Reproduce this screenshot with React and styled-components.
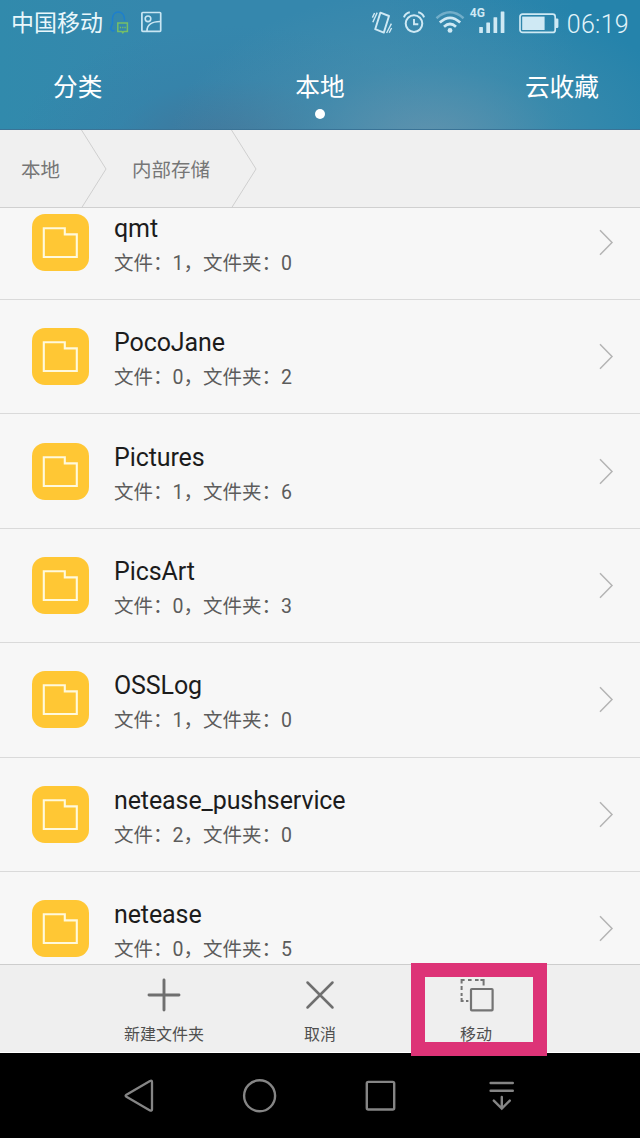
import React from 'react';
import styled, { createGlobalStyle } from 'styled-components';

const GlobalStyle = createGlobalStyle`
  * {
    box-sizing: border-box;
  }

  body {
    margin: 0;
    background: #000;
    font-family: Roboto, 'Noto Sans CJK SC', sans-serif;
  }

  svg {
    display: block;
    flex: none;
  }
`;

const Screen = styled.div`
  position: relative;
  display: flex;
  flex-direction: column;
  width: 640px;
  height: 1138px;
  overflow: hidden;
`;

const Header = styled.header`
  height: 130px;
  flex: none;
  border-bottom: 1px solid #3a7396;
  background: radial-gradient(
      ellipse 260px 150px at 430px 140px,
      rgba(100, 148, 174, 0.9),
      rgba(80, 146, 174, 0.45) 50%,
      rgba(60, 140, 172, 0) 100%
    ),
    radial-gradient(
      ellipse 220px 120px at 235px 145px,
      rgba(68, 112, 148, 0.85),
      rgba(56, 124, 164, 0.35) 55%,
      rgba(52, 132, 170, 0) 100%
    ),
    linear-gradient(90deg, #318aac 0%, #3587ad 25%, #3587ad 60%, #2583ab 90%);
`;

const StatusBar = styled.div`
  display: flex;
  align-items: center;
  justify-content: space-between;
  height: 46px;
  padding: 0 11px 0 11px;
  color: #cfe9f4;
`;

const StatusGroup = styled.div`
  display: flex;
  align-items: center;
`;

const Carrier = styled.span`
  margin-right: 6px;
  padding-top: 2px;
  font-size: 23px;
  line-height: 44px;
  color: #e9f7fb;
`;

const Clock = styled.span`
  padding-top: 3px;
  font-size: 25px;
  font-weight: 300;
  line-height: 43px;
  letter-spacing: 0.3px;
  color: #e2f4fa;
`;

const Tabs = styled.nav`
  display: grid;
  grid-template-columns: 1fr auto 1fr;
  height: 83px;
  padding: 0 41px 0 53px;
`;

const Tab = styled.div`
  display: flex;
  flex-direction: column;
  align-items: flex-start;
  padding-top: 24px;
  font-size: 24.7px;
  line-height: 36px;
  color: #fff;

  &:nth-child(2) {
    align-items: center;
    margin-left: -6px;
    margin-right: 6px;
  }

  &:last-child {
    align-items: flex-end;
  }
`;

const TabDot = styled.span`
  width: 10px;
  height: 10px;
  margin-top: 3px;
  border-radius: 50%;
  background: #fff;
`;

const Breadcrumbs = styled.div`
  display: flex;
  flex: none;
  height: 78px;
  border-bottom: 1px solid #d0d0d0;
  background: #f0f0f0;
`;

const Crumb = styled.div`
  display: flex;
  align-items: center;
  justify-content: space-between;
  width: ${props => props.$width}px;
  padding-left: ${props => props.$indent}px;
  font-size: 19.5px;
  color: #767676;
`;

const List = styled.div`
  flex: 1;
  min-height: 0;
  overflow: hidden;
  background: #f7f7f7;
`;

const Row = styled.div`
  display: flex;
  align-items: center;
  height: 114.4px;
  padding: 0 26px 0 32px;
  border-bottom: 1px solid #dadada;

  &:first-child {
    margin-top: -22.4px;
  }
`;

const FolderTile = styled.div`
  display: flex;
  align-items: center;
  justify-content: center;
  width: 57px;
  height: 57px;
  margin-right: 25px;
  border-radius: 13px;
  background: #ffc734;
`;

const RowText = styled.div`
  flex: 1;
  padding-top: 8px;
`;

const FolderName = styled.div`
  font-size: 25px;
  line-height: 34px;
  letter-spacing: -0.1px;
  color: #1c1c1c;
`;

const FolderMeta = styled.div`
  font-size: 19.5px;
  line-height: 35px;
  color: #5c5c5c;
`;

const Toolbar = styled.div`
  display: flex;
  flex: none;
  height: 89px;
  padding: 0 86px;
  border-top: 1px solid #cdcdcd;
  border-bottom: 1px solid #fff;
  background: #efefef;
`;

const ToolButton = styled.div`
  display: flex;
  flex: 1;
  flex-direction: column;
  align-items: center;
  padding-top: 12px;
  font-size: 16px;
  line-height: 22px;
  white-space: nowrap;
  color: #4f4f4f;

  svg {
    margin-bottom: 11px;
  }
`;

const NavBar = styled.div`
  display: flex;
  flex: none;
  height: 85px;
  padding: 0 78px;
  background: #000;
`;

const NavButton = styled.div`
  display: flex;
  flex: 1;
  align-items: center;
  justify-content: center;
`;

const Highlight = styled.div`
  position: absolute;
  left: 411px;
  top: 963px;
  width: 136px;
  height: 93px;
  border: 14px solid #dd3377;
`;

const folders = [
  { name: 'qmt', files: 1, dirs: 0 },
  { name: 'PocoJane', files: 0, dirs: 2 },
  { name: 'Pictures', files: 1, dirs: 6 },
  { name: 'PicsArt', files: 0, dirs: 3 },
  { name: 'OSSLog', files: 1, dirs: 0 },
  { name: 'netease_pushservice', files: 2, dirs: 0 },
  { name: 'netease', files: 0, dirs: 5 }
];

const NotificationIcons = () => (
  <svg width="54" height="26" viewBox="0 0 54 26" fill="none">
    <path
      d="M5.5 20.5 L3.5 21 L1.5 18.5 L3.5 13.5 V9 C3.5 -0.5 15 -0.5 15.5 9 V11"
      stroke="#1d7fce"
      strokeWidth="1.5"
    />
    <path
      d="M8.8 13 H18.4 V21.6 H14.8 L13.8 22.8 L12.8 21.6 H8.8 Z"
      stroke="#76bf67"
      strokeWidth="1.5"
    />
    <path d="M10.8 17.5 H16.8" stroke="#76bf67" strokeWidth="1.5" strokeDasharray="1.3 1" />
    <rect x="32.9" y="2.5" width="18.8" height="18.8" rx="0.8" stroke="#c9e6f3" strokeWidth="1.7" />
    <circle cx="39" cy="8.8" r="2.8" stroke="#c9e6f3" strokeWidth="1.6" />
    <path d="M38 21 C38 15 43 11.5 51 11.5" stroke="#c9e6f3" strokeWidth="1.7" />
  </svg>
);

const VibrateIcon = () => (
  <svg width="22" height="26" viewBox="0 0 22 26" fill="none" stroke="currentColor">
    <path
      d="M9.4 2.6 L18 6 L12.8 22.6 L4.2 19.2 Z"
      strokeWidth="1.9"
      strokeLinejoin="round"
    />
    <path
      d="M6.2 2.6 L1.8 12.2 M3.6 3 L1.4 7.6 M20.4 13.6 L15.6 23 M20.6 18 L18.2 22.8"
      strokeWidth="1.4"
    />
  </svg>
);

const AlarmIcon = () => (
  <svg width="22" height="24" viewBox="0 0 22 24" fill="none" stroke="currentColor">
    <circle cx="11" cy="12.6" r="8.3" strokeWidth="2" />
    <path d="M11 8 V13.2 H15.3" strokeWidth="1.9" />
    <path d="M0.9 6.4 Q2.4 2 6.8 1.2 M15.2 1.2 Q19.6 2 21.1 6.4" strokeWidth="2" />
  </svg>
);

const WifiIcon = () => (
  <svg width="30" height="24" viewBox="0 0 30 24" fill="none" stroke="currentColor">
    <path d="M1.5 7.2 Q15 -4.6 28.5 7.2" strokeWidth="2.5" opacity="0.4" />
    <path d="M4.8 11.6 Q15 2.2 25.2 11.6" strokeWidth="2.7" />
    <path d="M9 15.8 Q15 10.2 21 15.8" strokeWidth="2.7" />
    <circle cx="15" cy="19.4" r="2.4" fill="currentColor" stroke="none" />
  </svg>
);

const Signal = styled.div`
  display: flex;
  align-items: flex-start;
  width: 35px;
  height: 30px;
  margin-left: 5px;
`;

const NetworkType = styled.span`
  width: 9px;
  font-size: 12px;
  font-weight: 700;
  line-height: 11px;
`;

const SignalBars = () => (
  <svg width="26" height="28" viewBox="0 0 26 28" fill="currentColor">
    <rect x="0.2" y="19" width="3.7" height="6" rx="0.5" />
    <rect x="7.3" y="14.4" width="3.7" height="10.6" rx="0.5" />
    <rect x="14.5" y="9.2" width="3.7" height="15.8" rx="0.5" />
    <rect x="21.7" y="3.6" width="3.7" height="21.4" rx="0.5" />
  </svg>
);

const BatteryIcon = () => (
  <svg width="40" height="22" viewBox="0 0 40 22" fill="none">
    <rect x="1" y="1.2" width="35.2" height="18.2" rx="2.5" stroke="currentColor" strokeWidth="1.7" />
    <path d="M36.5 5.6 H38.2 Q39.4 5.6 39.4 6.8 V13.8 Q39.4 15 38.2 15 H36.5 Z" fill="currentColor" />
    <rect x="3.2" y="3.6" width="22.4" height="13.4" fill="currentColor" />
  </svg>
);

const CrumbArrow = () => (
  <svg width="26" height="78" viewBox="0 0 26 78" fill="none">
    <path d="M0.5 0 L25 39 L0.5 78" stroke="#cfcfcf" />
  </svg>
);

const FolderIcon = () => (
  <svg width="37" height="33" viewBox="0 0 37 33" fill="none">
    <path d="M1.8 2.2 H22.8 V8.4 H34.8 V31 H1.8 Z" stroke="#fff9dc" strokeWidth="2.1" />
  </svg>
);

const Chevron = () => (
  <svg width="15" height="27" viewBox="0 0 15 27" fill="none">
    <path d="M1 1.2 L13 13.5 L1 25.8" stroke="#b4b4b4" strokeWidth="1.5" />
  </svg>
);

const NewFolderIcon = () => (
  <svg width="36" height="36" viewBox="0 0 36 36">
    <path d="M18 3 V33 M3 18 H33" stroke="#6f6f6f" strokeWidth="2.9" strokeLinecap="round" />
  </svg>
);

const CancelIcon = () => (
  <svg width="36" height="36" viewBox="0 0 36 36">
    <path
      d="M5.5 5.5 L30.5 30.5 M30.5 5.5 L5.5 30.5"
      stroke="#6f6f6f"
      strokeWidth="2.5"
      strokeLinecap="round"
    />
  </svg>
);

const MoveIcon = () => (
  <svg width="36" height="36" viewBox="0 0 36 36" fill="none" stroke="#747474">
    <rect x="13" y="12" width="21.6" height="21.4" rx="0.8" strokeWidth="2.2" />
    <path
      d="M3.6 6.5 V3 H6.6 M10 3 H13.6 M17 3 H20.6 M22.4 3 H25.6 V8.5 M3.6 9 V13 M3.6 16 V19 M3.6 21 V24 H5.6 M8 24 H10.4"
      strokeWidth="2"
    />
  </svg>
);

const BackIcon = () => (
  <svg width="32" height="36" viewBox="0 0 32 36" fill="none">
    <path
      d="M3 18.5 Q2.2 17.8 3 17.1 L27 3 Q29 2.2 29 4 V31.4 Q29 33.2 27 32.4 Z"
      stroke="#858585"
      strokeWidth="2.3"
      strokeLinejoin="round"
    />
  </svg>
);

const HomeIcon = () => (
  <svg width="36" height="36" viewBox="0 0 36 36" fill="none">
    <circle cx="17.6" cy="17.8" r="15.5" stroke="#858585" strokeWidth="2.4" />
  </svg>
);

const RecentIcon = () => (
  <svg width="32" height="32" viewBox="0 0 32 32" fill="none">
    <rect x="1.8" y="1.9" width="27.4" height="27.6" rx="1.5" stroke="#858585" strokeWidth="2.4" />
  </svg>
);

const PullDownIcon = () => (
  <svg width="28" height="32" viewBox="0 0 28 32" fill="none">
    <path
      d="M2.6 3 H24.8 M2.6 10.8 H24.8 M13.8 17 V28.4 M5.8 20.6 L13.8 28.6 L21.8 20.6"
      stroke="#858585"
      strokeWidth="2.4"
      strokeLinecap="round"
    />
  </svg>
);

const Folder = ({ name, files, dirs }) => (
  <Row>
    <FolderTile>
      <FolderIcon />
    </FolderTile>
    <RowText>
      <FolderName>{name}</FolderName>
      <FolderMeta>{`文件：${files}，文件夹：${dirs}`}</FolderMeta>
    </RowText>
    <Chevron />
  </Row>
);

const StatusIcons = styled.div`
  display: flex;
  align-items: center;
  gap: 10px;
`;

const BatterySlot = styled.div`
  margin-left: 14px;
  margin-right: 8px;
  padding-top: 1px;
`;

export default function App() {
  return (
    <>
      <GlobalStyle />
      <Screen lang="zh-CN">
        <Header>
          <StatusBar>
            <StatusGroup>
              <Carrier>中国移动</Carrier>
              <NotificationIcons />
            </StatusGroup>
            <StatusGroup>
              <StatusIcons>
                <VibrateIcon />
                <AlarmIcon />
                <WifiIcon />
              </StatusIcons>
              <Signal>
                <NetworkType>4G</NetworkType>
                <SignalBars />
              </Signal>
              <BatterySlot>
                <BatteryIcon />
              </BatterySlot>
              <Clock>06:19</Clock>
            </StatusGroup>
          </StatusBar>
          <Tabs>
            <Tab>分类</Tab>
            <Tab>
              本地
              <TabDot />
            </Tab>
            <Tab>云收藏</Tab>
          </Tabs>
        </Header>
        <Breadcrumbs>
          <Crumb $width={107} $indent={21}>
            本地
            <CrumbArrow />
          </Crumb>
          <Crumb $width={150} $indent={25}>
            内部存储
            <CrumbArrow />
          </Crumb>
        </Breadcrumbs>
        <List>
          {folders.map(folder => (
            <Folder key={folder.name} {...folder} />
          ))}
        </List>
        <Toolbar>
          <ToolButton>
            <NewFolderIcon />
            新建文件夹
          </ToolButton>
          <ToolButton>
            <CancelIcon />
            取消
          </ToolButton>
          <ToolButton>
            <MoveIcon />
            移动
          </ToolButton>
        </Toolbar>
        <NavBar>
          <NavButton>
            <BackIcon />
          </NavButton>
          <NavButton>
            <HomeIcon />
          </NavButton>
          <NavButton>
            <RecentIcon />
          </NavButton>
          <NavButton>
            <PullDownIcon />
          </NavButton>
        </NavBar>
        <Highlight />
      </Screen>
    </>
  );
}
